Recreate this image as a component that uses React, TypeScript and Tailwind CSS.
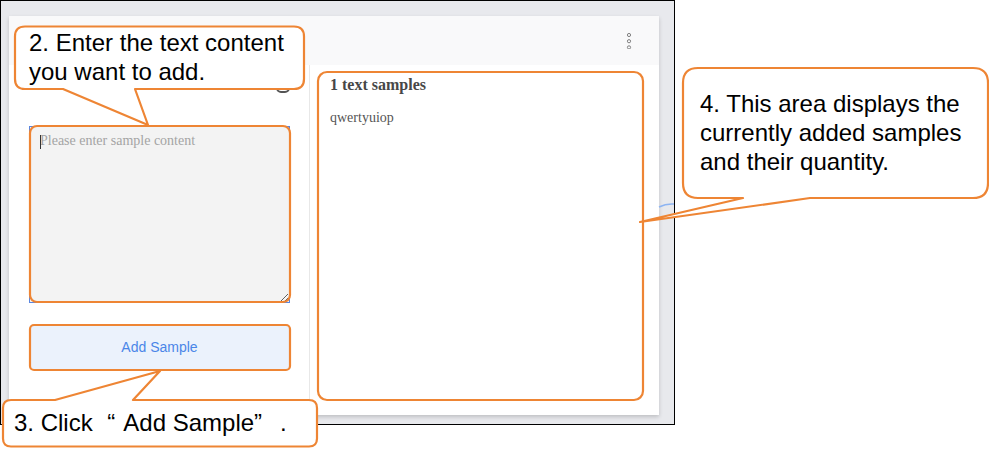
import React from 'react';

const ORANGE = '#ee8534';

const Kebab: React.FC = () => (
  <svg width="6" height="16" viewBox="0 0 6 16" fill="none" stroke="#808080" strokeWidth="1">
    <circle cx="3" cy="2" r="1.6" />
    <circle cx="3" cy="8.2" r="1.6" />
    <circle cx="3" cy="14.4" r="1.6" />
  </svg>
);

const Callouts: React.FC = () => (
  <svg className="pointer-events-none absolute left-0 top-0" width="989" height="449" viewBox="0 0 989 449">
    {/* blue arc peeking from behind the card */}
    <path d="M659 207 A28 28 0 0 1 674 204" fill="none" stroke="#8db4f2" strokeWidth="1.5" />

    {/* highlight boxes */}
    <rect x="30" y="126" width="260" height="176" rx="7" fill="none" stroke={ORANGE} strokeWidth="2.2" />
    <rect x="30" y="325" width="260" height="45" rx="4" fill="none" stroke={ORANGE} strokeWidth="2.2" />
    <rect x="318" y="72" width="325" height="328" rx="9" fill="none" stroke={ORANGE} strokeWidth="2.2" />

    {/* callout 2 */}
    <path
      d="M25 26.5 H294 Q304 26.5 304 36.5 V79 Q304 89 294 89 H135 L148 125 L63 89 H25 Q15 89 15 79 V36.5 Q15 26.5 25 26.5 Z"
      fill="white"
      stroke={ORANGE}
      strokeWidth="2.2"
      strokeLinejoin="round"
    />
    {/* callout 3 */}
    <path
      d="M11 400 H55 L160 371 L133 400 H309 Q317 400 317 408 V438.5 Q317 446.5 309 446.5 H11 Q3 446.5 3 438.5 V408 Q3 400 11 400 Z"
      fill="white"
      stroke={ORANGE}
      strokeWidth="2.2"
      strokeLinejoin="round"
    />
    {/* callout 4 */}
    <path
      d="M698 68 H973 Q988 68 988 83 V183 Q988 198 973 198 H810 L640 222 L743 198 H698 Q683 198 683 183 V83 Q683 68 698 68 Z"
      fill="white"
      stroke={ORANGE}
      strokeWidth="2.2"
      strokeLinejoin="round"
    />
  </svg>
);

const calloutText = "absolute text-[24px] leading-[29px] text-black font-['Liberation_Sans',Arial,sans-serif] whitespace-nowrap";

export default function App() {
  return (
    <div className="relative h-[449px] w-[989px] overflow-hidden bg-white">
      <div className="h-[425px] w-[675px] border border-black bg-[#e8e9ed] pl-[8px] pt-[15px]">
        <div className="flex h-[399px] w-[650px] flex-col bg-white shadow-[0_2px_4px_rgba(0,0,0,0.18)]">
          <div className="flex h-[49px] items-center justify-end bg-[#f9f9fa] pr-[27px]">
            <Kebab />
          </div>
          <div className="flex flex-1">
            <div className="w-[301px] border-r border-[#e8e8e8] pl-[20px] pt-[9px]">
              {/* panel title row, almost entirely hidden behind callout 2 */}
              <div className="flex h-[20px] items-end justify-between pr-[18px]">
                <div className="mb-[4px] h-[2px] w-[32px] bg-[#666]" />
                <svg width="16" height="16" viewBox="0 0 16 16" fill="none" stroke="#555" strokeWidth="2">
                  <rect x="2" y="2" width="12" height="12" rx="4" />
                </svg>
              </div>
              <div className="relative mt-[32px] w-[261px]">
                <textarea
                  readOnly
                  placeholder="Please enter sample content"
                  className="block h-[177px] w-[261px] border border-[#5a86e0] bg-[#f3f3f3] px-[10px] pt-[4px] font-['Liberation_Serif',serif] text-[14px] leading-[20px] text-[#333] outline-none placeholder:text-[#a4a4a4]"
                />
                <span className="absolute left-[11px] top-[9px] h-[14px] w-px bg-[#333]" />
              </div>
              <button className="mt-[22px] flex h-[45px] w-[261px] items-center justify-center rounded-[3px] bg-[#ebf2fc] font-['Liberation_Sans',Arial,sans-serif] text-[14px] text-[#4a86e8]">
                Add Sample
              </button>
            </div>
            <div className="flex-1 pl-[20px] pt-[10px] font-['Liberation_Serif',serif]">
              <div className="text-[16px] font-bold leading-[20px] text-[#474747]">1 text samples</div>
              <div className="mt-[13px] text-[14px] leading-[20px] text-[#555]">qwertyuiop</div>
            </div>
          </div>
        </div>
      </div>

      <Callouts />

      <div className={calloutText} style={{ left: 29, top: 28 }}>
        <div>2. Enter the text content</div>
        <div>you want to add.</div>
      </div>
      <div className={calloutText} style={{ left: 14, top: 408 }}>
        3. Click <span className="ml-[8px] mr-[8px]">“</span>Add Sample<span>”</span>
        <span className="ml-[18px]">.</span>
      </div>
      <div className={calloutText} style={{ left: 700, top: 89 }}>
        <div>4. This area displays the</div>
        <div>currently added samples</div>
        <div>and their quantity.</div>
      </div>
    </div>
  );
}
